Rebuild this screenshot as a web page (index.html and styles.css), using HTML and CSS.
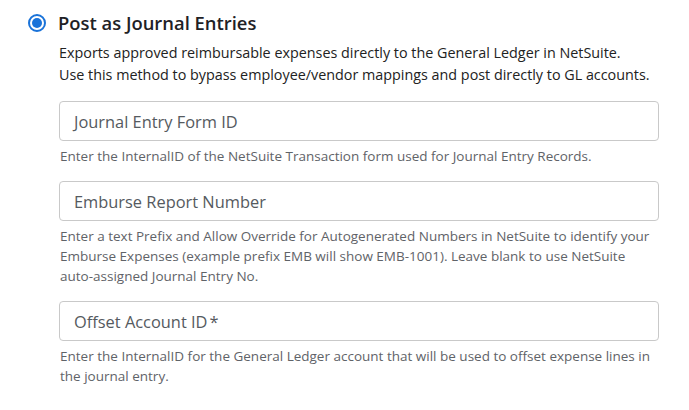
FILE: index.html
```html
<!DOCTYPE html>
<html>
<head>
<meta charset="utf-8">
<link rel="stylesheet" href="styles.css">
</head>
<body>
<div class="option">
  <div class="option-head">
    <span class="radio"><span class="radio-dot"></span></span>
    <span class="option-title">Post as Journal Entries</span>
  </div>
  <div class="option-body">
    <p class="desc">Exports approved reimbursable expenses directly to the General Ledger in NetSuite.<br>Use this method to bypass employee/vendor mappings and post directly to GL accounts.</p>
    <div class="field">
      <div class="input"><span class="placeholder">Journal Entry Form ID</span></div>
      <p class="help">Enter the InternalID of the NetSuite Transaction form used for Journal Entry Records.</p>
    </div>
    <div class="field">
      <div class="input"><span class="placeholder">Emburse Report Number</span></div>
      <p class="help">Enter a text Prefix and Allow Override for Autogenerated Numbers in NetSuite to identify your Emburse Expenses (example prefix EMB will show EMB-1001). Leave blank to use NetSuite auto-assigned Journal Entry No.</p>
    </div>
    <div class="field">
      <div class="input"><span class="placeholder">Offset Account ID<span class="req">*</span></span></div>
      <p class="help">Enter the InternalID for the General Ledger account that will be used to offset expense lines in the journal entry.</p>
    </div>
  </div>
</div>
</body>
</html>
```
FILE: styles.css
```css
html, body {
  margin: 0;
  padding: 0;
  background: #ffffff;
}
body {
  font-family: "Open Sans", "Noto Sans", sans-serif;
  color: #1f2328;
}
.option {
  padding: 10px 0 0 28px;
}
.option-head {
  display: flex;
  align-items: center;
  gap: 12px;
  height: 26px;
}
.radio {
  box-sizing: border-box;
  width: 18px;
  height: 18px;
  border-radius: 50%;
  border: 2px solid #1a73d9;
  display: flex;
  align-items: center;
  justify-content: center;
}
.radio-dot {
  width: 10px;
  height: 10px;
  border-radius: 50%;
  background: #1a73d9;
}
.option-title {
  font-size: 18.4px;
  font-weight: 600;
  color: #1e2125;
  line-height: 26px;
}
.option-body {
  padding-left: 31px;
  width: 600px;
}
.desc {
  margin: 6px 0 0 0;
  font-size: 14.35px;
  line-height: 22px;
  color: #222;
  white-space: nowrap;
}
.field {
  margin-top: 15px;
}
.field + .field {
  margin-top: 15px;
}
.input {
  box-sizing: border-box;
  height: 40px;
  border: 1px solid #c9c9c9;
  border-radius: 4px;
  display: flex;
  align-items: center;
  padding-left: 14px;
}
.placeholder {
  font-size: 16.4px;
  color: #555a60;
}
.req {
  margin-left: 2px;
}
.help {
  margin: 5px 0 0 0;
  padding-left: 1px;
  font-size: 13.5px;
  line-height: 20px;
  color: #5f6368;
}
```
